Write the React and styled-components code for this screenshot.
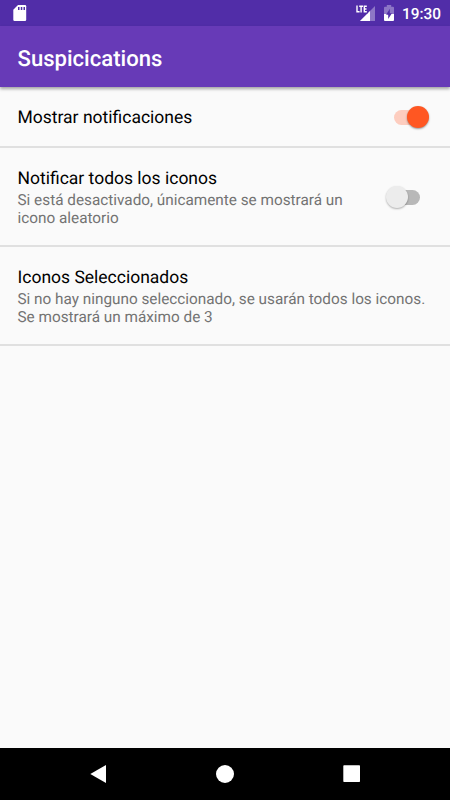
import styled, { createGlobalStyle } from 'styled-components';

const GlobalStyle = createGlobalStyle`
  * {
    box-sizing: border-box;
  }
  body {
    margin: 0;
    background: #fafafa;
    font-family: Roboto, sans-serif;
    text-rendering: geometricPrecision;
  }
`;

const Screen = styled.div`
  width: 450px;
  height: 800px;
  display: flex;
  flex-direction: column;
  background: #fafafa;
  overflow: hidden;
`;

const StatusBar = styled.div`
  height: 26px;
  flex: none;
  display: flex;
  align-items: center;
  padding: 2px 9px 0 12px;
  background: #512da8;
  color: white;
`;

const StatusIcons = styled.div`
  display: flex;
  align-items: center;
  gap: 7px;
  margin-left: auto;
`;

const Clock = styled.span`
  font-size: 15.4px;
  font-weight: 500;
  line-height: 24px;
`;

const Toolbar = styled.header`
  height: 61px;
  flex: none;
  display: flex;
  align-items: center;
  padding: 5px 17.5px 0;
  background: #673ab7;
  box-shadow: 0 2px 3px rgba(0, 0, 0, 0.35);
  z-index: 1;
`;

const Title = styled.h1`
  margin: 0;
  color: white;
  font-size: 22.1px;
  font-weight: 500;
  line-height: 26px;
`;

const List = styled.main`
  flex: 1;
`;

const Preference = styled.div`
  height: ${(props) => props.$height}px;
  display: flex;
  align-items: center;
  justify-content: space-between;
  padding: 1px ${(props) => props.$right || 17.5}px 0 17.5px;
  border-bottom: 2px solid #e0e0e0;
`;

const Labels = styled.div`
  padding-top: 2px;
`;

const Name = styled.div`
  color: #000000;
  font-size: 17.5px;
  line-height: 21px;
`;

const Summary = styled.div`
  margin-top: 1px;
  color: #737373;
  font-size: 15.32px;
  line-height: 18px;
  white-space: pre-line;
`;

const Track = styled.div`
  width: 26px;
  height: 15px;
  flex: none;
  position: relative;
  border-radius: 8px;
  background: ${(props) => (props.$on ? '#fdcdbf' : '#b8b8b8')};
`;

const Thumb = styled.div`
  position: absolute;
  top: -3.5px;
  left: ${(props) => (props.$on ? 13 : -8)}px;
  width: 22px;
  height: 22px;
  border-radius: 50%;
  background: ${(props) => (props.$on ? '#ff5722' : '#ececec')};
  box-shadow: 0 1px 2px rgba(0, 0, 0, ${(props) => (props.$on ? 0.4 : 0.3)});
`;

const NavBar = styled.nav`
  height: 52px;
  flex: none;
  display: flex;
  justify-content: center;
  align-items: center;
  gap: 109px;
  background: black;
`;

const Switch = ({ on }) => (
  <Track $on={on}>
    <Thumb $on={on} />
  </Track>
);

const SdCard = () => (
  <svg width="16" height="18" viewBox="0 0 16 18">
    <path d="M6 0h7a1.2 1.2 0 0 1 1.2 1.2v13.6A1.2 1.2 0 0 1 13 16H2.5a1.2 1.2 0 0 1-1.2-1.2V4.8z" fill="white" />
    <path d="M6 2h1.5v3H6zM8.8 2h1.5v3H8.8zM11.5 2H13v3h-1.5z" fill="#512da8" />
  </svg>
);

const Signal = () => (
  <svg width="20" height="18" viewBox="0 0 20 18">
    <path d="M19 1v15H4z" fill="white" opacity="0.35" />
    <path d="M14 6v10H4z" fill="white" />
    <path d="M0 0h11.6v8.5H0z" fill="#512da8" />
    <path d="M1 0.5v6.3h2.6M3.2 1.2h3.8M5.1 1.2v6.3M10.8 1.2H8.3v5.6h2.5M8.3 4h2.2" fill="none" stroke="white" strokeWidth="1.4" />
  </svg>
);

const Battery = () => (
  <svg width="12" height="18" viewBox="0 0 12 18">
    <path d="M1 2.7a1 1 0 0 1 1-1h1.8V0h4.4v1.7H10a1 1 0 0 1 1 1V9H1z" fill="white" opacity="0.35" />
    <path d="M1 9h10v6a1 1 0 0 1-1 1H2a1 1 0 0 1-1-1z" fill="white" />
    <path d="M6.8 3.8v4.4h2.1L5.2 14V9.7H3.1z" fill="#512da8" />
  </svg>
);

const preferences = [
  { name: 'Mostrar notificaciones', height: 61, right: 30, on: true },
  {
    name: 'Notificar todos los iconos',
    summary: 'Si está desactivado, únicamente se mostrará un\nicono aleatorio',
    height: 99,
    right: 30,
    on: false,
  },
  {
    name: 'Iconos Seleccionados',
    summary: 'Si no hay ninguno seleccionado, se usarán todos los iconos.\nSe mostrará un máximo de 3',
    height: 99,
  },
];

const App = () => {
  return (
    <>
      <GlobalStyle />
      <Screen>
        <StatusBar>
          <SdCard />
          <StatusIcons>
            <Signal />
            <Battery />
            <Clock>19:30</Clock>
          </StatusIcons>
        </StatusBar>
        <Toolbar>
          <Title>Suspicications</Title>
        </Toolbar>
        <List>
          {preferences.map((item) => (
            <Preference key={item.name} $height={item.height} $right={item.right}>
              <Labels>
                <Name>{item.name}</Name>
                {item.summary && <Summary>{item.summary}</Summary>}
              </Labels>
              {item.on !== undefined && <Switch on={item.on} />}
            </Preference>
          ))}
        </List>
        <NavBar>
          <svg width="18" height="18" viewBox="0 0 18 18">
            <path d="M17 0v18L1.3 9z" fill="white" />
          </svg>
          <svg width="18" height="18" viewBox="0 0 18 18">
            <circle cx="9" cy="9" r="9" fill="white" />
          </svg>
          <svg width="18" height="18" viewBox="0 0 18 18">
            <rect x="0.3" y="0.3" width="16.7" height="16.7" rx="0.7" fill="white" />
          </svg>
        </NavBar>
      </Screen>
    </>
  );
};

export default App;
